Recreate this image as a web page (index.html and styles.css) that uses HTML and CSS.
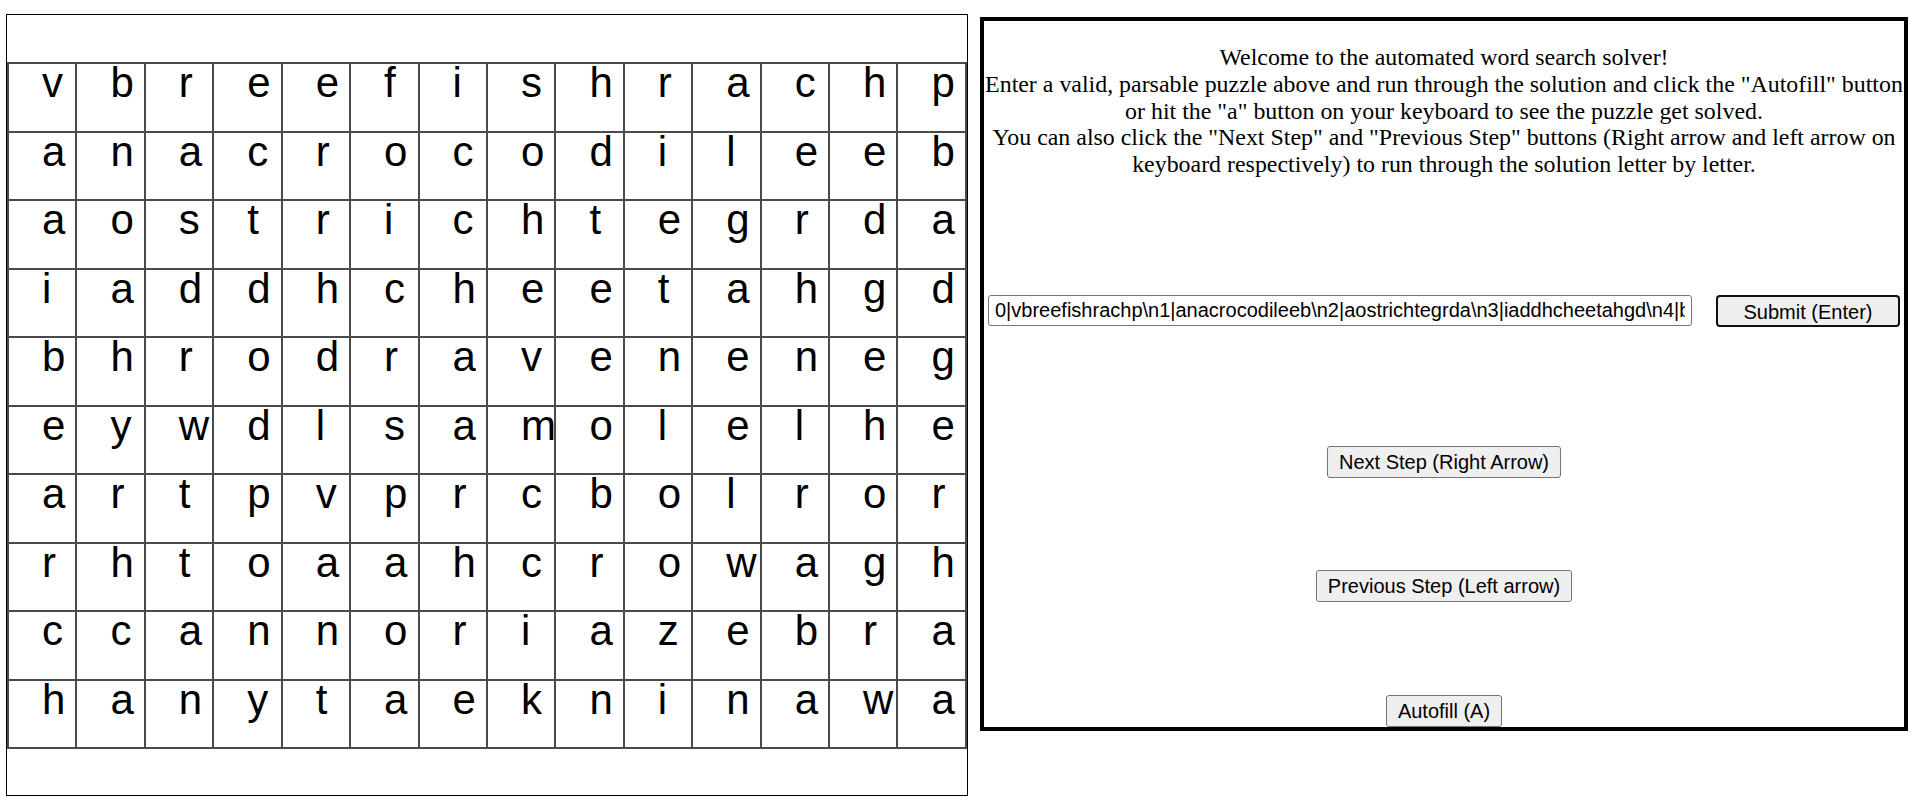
FILE: index.html
```html
<!DOCTYPE html>
<html lang="en">
<head>
<meta charset="utf-8">
<title>Word Search Solver</title>
<link rel="stylesheet" href="styles.css">
</head>
<body>
<div class="board">
  <table class="grid">
    <tr><td>v</td><td>b</td><td>r</td><td>e</td><td>e</td><td>f</td><td>i</td><td>s</td><td>h</td><td>r</td><td>a</td><td>c</td><td>h</td><td>p</td></tr>
    <tr><td>a</td><td>n</td><td>a</td><td>c</td><td>r</td><td>o</td><td>c</td><td>o</td><td>d</td><td>i</td><td>l</td><td>e</td><td>e</td><td>b</td></tr>
    <tr><td>a</td><td>o</td><td>s</td><td>t</td><td>r</td><td>i</td><td>c</td><td>h</td><td>t</td><td>e</td><td>g</td><td>r</td><td>d</td><td>a</td></tr>
    <tr><td>i</td><td>a</td><td>d</td><td>d</td><td>h</td><td>c</td><td>h</td><td>e</td><td>e</td><td>t</td><td>a</td><td>h</td><td>g</td><td>d</td></tr>
    <tr><td>b</td><td>h</td><td>r</td><td>o</td><td>d</td><td>r</td><td>a</td><td>v</td><td>e</td><td>n</td><td>e</td><td>n</td><td>e</td><td>g</td></tr>
    <tr><td>e</td><td>y</td><td>w</td><td>d</td><td>l</td><td>s</td><td>a</td><td>m</td><td>o</td><td>l</td><td>e</td><td>l</td><td>h</td><td>e</td></tr>
    <tr><td>a</td><td>r</td><td>t</td><td>p</td><td>v</td><td>p</td><td>r</td><td>c</td><td>b</td><td>o</td><td>l</td><td>r</td><td>o</td><td>r</td></tr>
    <tr><td>r</td><td>h</td><td>t</td><td>o</td><td>a</td><td>a</td><td>h</td><td>c</td><td>r</td><td>o</td><td>w</td><td>a</td><td>g</td><td>h</td></tr>
    <tr><td>c</td><td>c</td><td>a</td><td>n</td><td>n</td><td>o</td><td>r</td><td>i</td><td>a</td><td>z</td><td>e</td><td>b</td><td>r</td><td>a</td></tr>
    <tr><td>h</td><td>a</td><td>n</td><td>y</td><td>t</td><td>a</td><td>e</td><td>k</td><td>n</td><td>i</td><td>n</td><td>a</td><td>w</td><td>a</td></tr>
  </table>
</div>
<div class="controls">
  <p class="intro">Welcome to the automated word search solver!<br>Enter a valid, parsable puzzle above and run through the solution and click the "Autofill" button or hit the "a" button on your keyboard to see the puzzle get solved.<br>You can also click the "Next Step" and "Previous Step" buttons (Right arrow and left arrow on keyboard respectively) to run through the solution letter by letter.</p>
  <div class="entry-row">
    <input class="puzzle-input" type="text" value="0|vbreefishrachp\n1|anacrocodileeb\n2|aostrichtegrda\n3|iaddhcheetahgd\n4|bhrodravenenegn\n5|eywdlsamolelhe\n6|artpvprcbolror\n7|rhtoaahcrowagh\n8|ccannoriazebra\n9|hanytaeknînawa">
    <button class="btn btn-submit">Submit (Enter)</button>
  </div>
  <button class="btn btn-next">Next Step (Right Arrow)</button>
  <button class="btn btn-prev">Previous Step (Left arrow)</button>
  <button class="btn btn-auto">Autofill (A)</button>
</div>
</body>
</html>
```

FILE: styles.css
```css
html, body {
  margin: 0;
  background: #fff;
}

body {
  display: flex;
  align-items: flex-start;
  gap: 12px;
  padding: 14px 6px;
}

.board {
  box-sizing: border-box;
  width: 962px;
  height: 782px;
  border: 1px solid #000;
  padding-top: 47px;
}

.grid {
  width: 100%;
  border-collapse: collapse;
  table-layout: fixed;
  font-family: "Liberation Sans", Arial, sans-serif;
  font-size: 42px;
  color: #000;
}

.grid td {
  box-sizing: border-box;
  height: 68.5px;
  border: 2px solid #4a4a4a;
  padding: 0 0 0 33px;
  text-align: left;
  vertical-align: top;
  line-height: 38px;
  white-space: nowrap;
  overflow: visible;
}

.controls {
  box-sizing: border-box;
  width: 928px;
  height: 714px;
  margin-top: 3px;
  border: 4px solid #000;
  display: flex;
  flex-direction: column;
  align-items: center;
}

.intro {
  margin: 23px 0 0;
  font-family: "Liberation Serif", "Times New Roman", serif;
  font-size: 23.9px;
  line-height: 26.8px;
  text-align: center;
  color: #000;
}

.entry-row {
  align-self: stretch;
  display: flex;
  align-items: center;
  gap: 24px;
  padding: 0 4px;
  margin-top: 117px;
}

.puzzle-input {
  box-sizing: border-box;
  flex: 1;
  min-width: 0;
  height: 31px;
  border: 1px solid #767676;
  border-radius: 3px;
  padding: 0 6px;
  font-family: "Liberation Sans", Arial, sans-serif;
  font-size: 20px;
  color: #000;
  background: #fff;
}

.btn {
  box-sizing: border-box;
  font-family: "Liberation Sans", Arial, sans-serif;
  font-size: 20px;
  line-height: 24px;
  color: #000;
  background: #efefef;
  border: 1px solid #767676;
  border-radius: 3px;
  padding: 3px 11px;
}

.btn-submit {
  width: 184px;
  height: 32px;
  border: 2px solid #101010;
  border-radius: 4px;
}

.btn-next {
  margin-top: 119px;
}

.btn-prev {
  margin-top: 92px;
}

.btn-auto {
  margin-top: 93px;
}
```
